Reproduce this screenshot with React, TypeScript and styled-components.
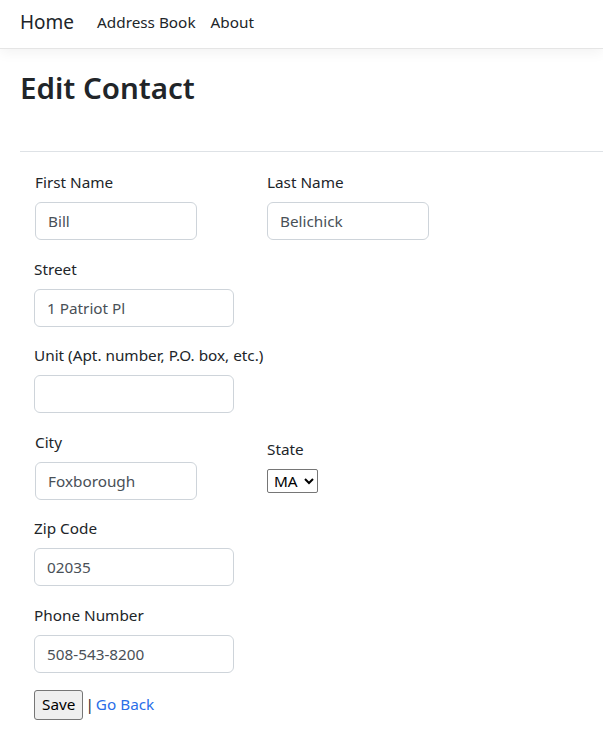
import React from "react";
import styled, { createGlobalStyle } from "styled-components";

const Global = createGlobalStyle`
  * { box-sizing: border-box; }
  body {
    margin: 0;
    font-family: "Noto Sans", "Open Sans", sans-serif;
    font-size: 15.3px;
    line-height: 1.5;
    color: #212529;
    background: #fff;
  }
`;

const Navbar = styled.header`
  display: flex;
  align-items: center;
  height: 49px;
  padding: 0 20px 4px;
  background: #fff;
  border-bottom: 1px solid #e5e5e5;
  box-shadow: 0 4px 12px rgba(0, 0, 0, 0.05);
  margin-bottom: 16px;
`;

const Brand = styled.a`
  font-size: 19px;
  color: #212529;
  text-decoration: none;
  margin-right: 23px;
`;

const NavLinks = styled.nav`
  display: flex;
  gap: 15px;
`;

const NavLink = styled.a`
  font-size: 15.3px;
  color: #212529;
  text-decoration: none;
`;

const Container = styled.main`
  padding-left: 20px;
`;

const Title = styled.h1`
  margin: 0;
  padding-top: 5px;
  font-size: 29.5px;
  font-weight: 600;
  line-height: 1.2;
  height: 70px;
`;

const Rule = styled.hr`
  margin: 16px 0 18px;
  border: 0;
  border-top: 1px solid #dee2e6;
`;

const Form = styled.form`
  padding-left: 14px;
  display: flex;
  flex-direction: column;
`;

const Row = styled.div`
  display: flex;
  align-items: center;
  padding-left: 1px;
`;

const Group = styled.div<{ $width?: number }>`
  display: flex;
  flex-direction: column;
  align-items: flex-start;
  width: ${(p) => (p.$width ? `${p.$width}px` : "auto")};
  margin-bottom: 16.6px;
`;

const Label = styled.label`
  display: block;
  line-height: 24px;
  margin-bottom: 8px;
`;

const Input = styled.input<{ $width: number }>`
  width: ${(p) => p.$width}px;
  height: 38px;
  padding: 6px 12px;
  font: inherit;
  color: #495057;
  border: 1px solid #ced4da;
  border-radius: 6px;
  background: #fff;
  outline: none;
`;

const Select = styled.select`
  height: 24px;
  width: 51px;
  font: inherit;
  color: #000;
  border: 1px solid #767676;
  border-radius: 2px;
  background: #fff;
  padding: 0 2px;
`;

const Actions = styled.div`
  display: flex;
  align-items: center;
  gap: 2px;
`;

const Button = styled.button`
  height: 30px;
  padding: 0 7px;
  font: inherit;
  color: #000;
  background: #efefef;
  border: 1px solid #767676;
  border-radius: 3px;
`;

const Link = styled.a`
  color: #2a6ee8;
  text-decoration: none;
`;

export default function App() {
  return (
    <>
      <Global />
      <Navbar>
        <Brand href="#">Home</Brand>
        <NavLinks>
          <NavLink href="#">Address Book</NavLink>
          <NavLink href="#">About</NavLink>
        </NavLinks>
      </Navbar>
      <Container>
        <Title>Edit Contact</Title>
        <Rule />
        <Form onSubmit={(e) => e.preventDefault()}>
          <Row>
            <Group $width={232}>
              <Label>First Name</Label>
              <Input $width={162} defaultValue="Bill" />
            </Group>
            <Group>
              <Label>Last Name</Label>
              <Input $width={162} defaultValue="Belichick" />
            </Group>
          </Row>
          <Group>
            <Label>Street</Label>
            <Input $width={200} defaultValue="1 Patriot Pl" />
          </Group>
          <Group>
            <Label>Unit (Apt. number, P.O. box, etc.)</Label>
            <Input $width={200} defaultValue="" />
          </Group>
          <Row>
            <Group $width={232}>
              <Label>City</Label>
              <Input $width={162} defaultValue="Foxborough" />
            </Group>
            <Group>
              <Label>State</Label>
              <Select defaultValue="MA">
                <option>MA</option>
                <option>NH</option>
                <option>RI</option>
              </Select>
            </Group>
          </Row>
          <Group>
            <Label>Zip Code</Label>
            <Input $width={200} defaultValue="02035" />
          </Group>
          <Group>
            <Label>Phone Number</Label>
            <Input $width={200} defaultValue="508-543-8200" />
          </Group>
          <Actions>
            <Button type="submit">Save</Button>
            <span>|</span>
            <Link href="#">Go Back</Link>
          </Actions>
        </Form>
      </Container>
    </>
  );
}
